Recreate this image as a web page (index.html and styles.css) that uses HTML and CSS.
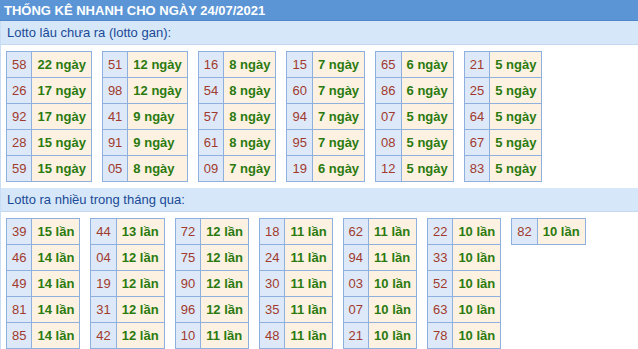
FILE: index.html
```html
<!DOCTYPE html>
<html lang="vi">
<head>
<meta charset="utf-8">
<title>Thống kê nhanh</title>
<link rel="stylesheet" href="styles.css">
</head>
<body>
<div class="page">
  <div class="title">THỐNG KÊ NHANH CHO NGÀY 24/07/2021</div>
  <div class="content">
    <div class="band">Lotto lâu chưa ra (lotto gan):</div>
    <div class="tables">
      <table><tr><td class="n">58</td><td class="v">22 ngày</td></tr><tr><td class="n">26</td><td class="v">17 ngày</td></tr><tr><td class="n">92</td><td class="v">17 ngày</td></tr><tr><td class="n">28</td><td class="v">15 ngày</td></tr><tr><td class="n">59</td><td class="v">15 ngày</td></tr></table>
      <table><tr><td class="n">51</td><td class="v">12 ngày</td></tr><tr><td class="n">98</td><td class="v">12 ngày</td></tr><tr><td class="n">41</td><td class="v">9 ngày</td></tr><tr><td class="n">91</td><td class="v">9 ngày</td></tr><tr><td class="n">05</td><td class="v">8 ngày</td></tr></table>
      <table><tr><td class="n">16</td><td class="v">8 ngày</td></tr><tr><td class="n">54</td><td class="v">8 ngày</td></tr><tr><td class="n">57</td><td class="v">8 ngày</td></tr><tr><td class="n">61</td><td class="v">8 ngày</td></tr><tr><td class="n">09</td><td class="v">7 ngày</td></tr></table>
      <table><tr><td class="n">15</td><td class="v">7 ngày</td></tr><tr><td class="n">60</td><td class="v">7 ngày</td></tr><tr><td class="n">94</td><td class="v">7 ngày</td></tr><tr><td class="n">95</td><td class="v">7 ngày</td></tr><tr><td class="n">19</td><td class="v">6 ngày</td></tr></table>
      <table><tr><td class="n">65</td><td class="v">6 ngày</td></tr><tr><td class="n">86</td><td class="v">6 ngày</td></tr><tr><td class="n">07</td><td class="v">5 ngày</td></tr><tr><td class="n">08</td><td class="v">5 ngày</td></tr><tr><td class="n">12</td><td class="v">5 ngày</td></tr></table>
      <table><tr><td class="n">21</td><td class="v">5 ngày</td></tr><tr><td class="n">25</td><td class="v">5 ngày</td></tr><tr><td class="n">64</td><td class="v">5 ngày</td></tr><tr><td class="n">67</td><td class="v">5 ngày</td></tr><tr><td class="n">83</td><td class="v">5 ngày</td></tr></table>
    </div>
    <div class="band">Lotto ra nhiều trong tháng qua:</div>
    <div class="tables">
      <table><tr><td class="n">39</td><td class="v">15 lần</td></tr><tr><td class="n">46</td><td class="v">14 lần</td></tr><tr><td class="n">49</td><td class="v">14 lần</td></tr><tr><td class="n">81</td><td class="v">14 lần</td></tr><tr><td class="n">85</td><td class="v">14 lần</td></tr></table>
      <table><tr><td class="n">44</td><td class="v">13 lần</td></tr><tr><td class="n">04</td><td class="v">12 lần</td></tr><tr><td class="n">19</td><td class="v">12 lần</td></tr><tr><td class="n">31</td><td class="v">12 lần</td></tr><tr><td class="n">42</td><td class="v">12 lần</td></tr></table>
      <table><tr><td class="n">72</td><td class="v">12 lần</td></tr><tr><td class="n">75</td><td class="v">12 lần</td></tr><tr><td class="n">90</td><td class="v">12 lần</td></tr><tr><td class="n">96</td><td class="v">12 lần</td></tr><tr><td class="n">10</td><td class="v">11 lần</td></tr></table>
      <table><tr><td class="n">18</td><td class="v">11 lần</td></tr><tr><td class="n">24</td><td class="v">11 lần</td></tr><tr><td class="n">30</td><td class="v">11 lần</td></tr><tr><td class="n">35</td><td class="v">11 lần</td></tr><tr><td class="n">48</td><td class="v">11 lần</td></tr></table>
      <table><tr><td class="n">62</td><td class="v">11 lần</td></tr><tr><td class="n">94</td><td class="v">11 lần</td></tr><tr><td class="n">03</td><td class="v">10 lần</td></tr><tr><td class="n">07</td><td class="v">10 lần</td></tr><tr><td class="n">21</td><td class="v">10 lần</td></tr></table>
      <table><tr><td class="n">22</td><td class="v">10 lần</td></tr><tr><td class="n">33</td><td class="v">10 lần</td></tr><tr><td class="n">52</td><td class="v">10 lần</td></tr><tr><td class="n">63</td><td class="v">10 lần</td></tr><tr><td class="n">78</td><td class="v">10 lần</td></tr></table>
      <table><tr><td class="n">82</td><td class="v">10 lần</td></tr></table>
    </div>
  </div>
</div>
</body>
</html>
```
FILE: styles.css
```css
html, body {
  margin: 0;
  padding: 0;
  background: #ffffff;
}
body {
  font-family: "Liberation Sans", Arial, sans-serif;
}
.page {
  width: 638px;
}
.title {
  height: 20px;
  line-height: 21px;
  background: #5b95d6;
  color: #ffffff;
  font-size: 13px;
  font-weight: bold;
  padding-left: 4px;
  border-bottom: 1px solid #4f88c8;
}
.content {
  border-left: 1px solid #c8dcf3;
}
.band {
  height: 23px;
  line-height: 23px;
  background: #d6e7f9;
  border-bottom: 1px solid #c4d9f0;
  color: #1a4a96;
  font-size: 13px;
  padding-left: 6px;
}
.tables {
  display: flex;
  align-items: flex-start;
  gap: 10px;
  padding: 6px 0 6px 5px;
}
table {
  border-collapse: collapse;
}
td {
  border: 1px solid #8eb0df;
  padding: 5px 5px;
  line-height: 15px;
  font-size: 13px;
  white-space: nowrap;
}
td.n {
  background: #dde9f8;
  color: #a13a2e;
  text-align: center;
}
td.v {
  background: #fdf2e1;
  color: #2b7a10;
  font-weight: bold;
}
```
